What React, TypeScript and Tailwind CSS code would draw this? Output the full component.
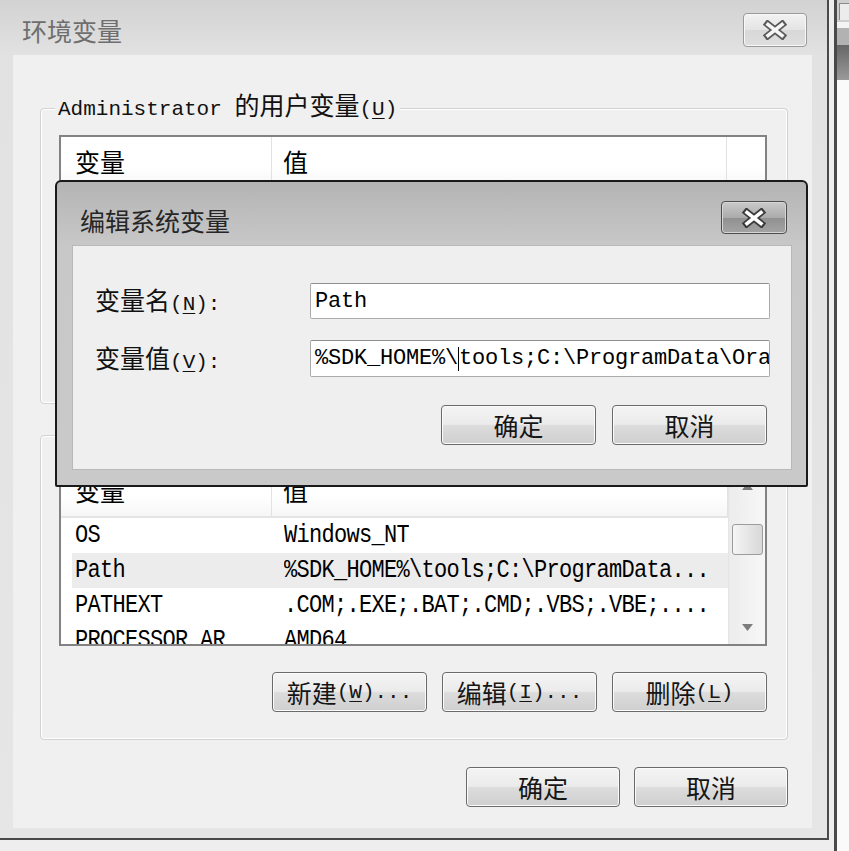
import React from "react";

const CJK = "font-['Noto_Sans_CJK_SC',sans-serif]";

function Half({ children }: { children: React.ReactNode }) {
  return <span className="font-['Liberation_Mono',monospace] text-[21px]">{children}</span>;
}

function U({ children }: { children: React.ReactNode }) {
  return <span className="underline underline-offset-[3px] decoration-1">{children}</span>;
}

function XGlyph({ outline, fill }: { outline: string; fill: string }) {
  return (
    <svg width="26" height="20" viewBox="0 0 26 20">
      <path d="M3 2 L23 18 M23 2 L3 18" stroke={outline} strokeWidth="7" fill="none" />
      <path d="M4.6 3.3 L21.4 16.7 M21.4 3.3 L4.6 16.7" stroke={fill} strokeWidth="3.6" fill="none" />
    </svg>
  );
}

function Btn({ children, className }: { children: React.ReactNode; className: string }) {
  return (
    <div
      className={
        "flex items-center justify-center rounded-[4px] border border-[#6a6a6a] bg-[linear-gradient(#f4f4f4,#ebebeb_48%,#dcdcdc_52%,#cfcfcf)] shadow-[inset_0_0_0_1px_#fbfbfb] text-[25px] leading-none text-[#151515] whitespace-nowrap " +
        className
      }
    >
      {children}
    </div>
  );
}

type Row = { name: string; value: string; sel?: boolean };

function ListHeader({ filler }: { filler: boolean }) {
  return (
    <div className="h-[52px] shrink-0 flex border-b-2 border-[#e4e4e4] bg-[linear-gradient(#ffffff,#ffffff_60%,#f6f6f6)] text-[25px] text-black">
      <div className="w-[211px] shrink-0 border-r border-[#e2e2e2] pl-[14px] flex items-center">变量</div>
      <div className={filler ? "w-[455px] shrink-0 border-r border-[#e2e2e2] pl-[11px] flex items-center" : "flex-1 border-r border-[#e2e2e2] pl-[11px] flex items-center"}>值</div>
      {filler ? <div className="flex-1" /> : null}
    </div>
  );
}

function ListRows({ rows }: { rows: Row[] }) {
  return (
    <div className="flex flex-col font-['Liberation_Mono',monospace] text-[22px] tracking-[-0.7px] text-black">
      {rows.map((r) => (
        <div
          key={r.name}
          className={
            r.sel
              ? "h-[35px] shrink-0 ml-[11px] flex items-center bg-[#ececec] whitespace-nowrap"
              : "h-[35px] shrink-0 ml-[11px] flex items-center whitespace-nowrap"
          }
        >
          <div className="w-[200px] shrink-0 pl-[3px] overflow-hidden scale-y-[1.18]">{r.name}</div>
          <div className="pl-[12px] overflow-hidden scale-y-[1.18]">{r.value}</div>
        </div>
      ))}
    </div>
  );
}

function Arrow({ up }: { up: boolean }) {
  return (
    <svg width="11" height="7" viewBox="0 0 11 7">
      <path d={up ? "M0 7 L5.5 0 L11 7 Z" : "M0 0 L11 0 L5.5 7 Z"} fill="#7c7c7c" />
    </svg>
  );
}

function UserList() {
  const rows: Row[] = [
    { name: "TEMP", value: "%USERPROFILE%\\AppData\\Local\\Temp" },
    { name: "TMP", value: "%USERPROFILE%\\AppData\\Local\\Temp" },
  ];
  return (
    <div className="w-[708px] h-[182px] shrink-0 border-2 border-[#828282] bg-white flex flex-col overflow-hidden">
      <ListHeader filler={true} />
      <ListRows rows={rows} />
    </div>
  );
}

function SystemList() {
  const rows: Row[] = [
    { name: "OS", value: "Windows_NT" },
    { name: "Path", value: "%SDK_HOME%\\tools;C:\\ProgramData...", sel: true },
    { name: "PATHEXT", value: ".COM;.EXE;.BAT;.CMD;.VBS;.VBE;...." },
    { name: "PROCESSOR_AR", value: "AMD64" },
  ];
  return (
    <div className="w-[708px] h-[182px] shrink-0 border-2 border-[#828282] bg-white flex overflow-hidden">
      <div className="w-[667px] shrink-0 flex flex-col overflow-hidden">
        <ListHeader filler={false} />
        <ListRows rows={rows} />
      </div>
      <div className="w-[37px] shrink-0 h-full border-l border-[#e4e4e4] bg-[linear-gradient(90deg,#ececec,#f7f7f7)] flex flex-col items-center">
        <div className="h-[40px] shrink-0 flex items-center justify-center">
          <Arrow up={true} />
        </div>
        <div className="mt-[18px] w-[31px] h-[31px] shrink-0 rounded-[3px] border border-[#9c9c9c] bg-[linear-gradient(90deg,#f6f6f6,#e6e6e6_50%,#d8d8d8)]" />
        <div className="flex-1" />
        <div className="h-[34px] shrink-0 flex items-center justify-center">
          <Arrow up={false} />
        </div>
      </div>
    </div>
  );
}

export default function App() {
  return (
    <div className={"relative w-[849px] h-[851px] overflow-hidden bg-[#eeeeee] flex items-start text-black " + CJK}>
      {/* main window */}
      <div className="w-[829px] h-[840px] shrink-0 flex flex-col border-r-2 border-b-2 border-[#4a4a4a] bg-[linear-gradient(#d2d2d2,#e2e2e2_55px,#e6e6e6)]">
        <div className="h-[55px] shrink-0 flex items-start justify-between pl-[22px] pr-[20px]">
          <div className="mt-[14px] text-[25px] leading-[32px] text-[#6e6e6e]">环境变量</div>
          <div className="mt-[13px] w-[64px] h-[34px] rounded-[4px] border border-[#9a9a9a] bg-[linear-gradient(#f2f2f2,#e4e4e4_50%,#d8d8d8_50%,#dedede)] shadow-[inset_0_0_0_1px_#f8f8f8] flex items-center justify-center">
            <XGlyph outline="#5a5a5a" fill="#f6f6f6" />
          </div>
        </div>

        <div className="ml-[13px] w-[799px] h-[773px] shrink-0 bg-[#f0f0f0] flex flex-col pl-[27px] pt-[53px]">
          {/* group 1 */}
          <div className="relative w-[748px] h-[296px] shrink-0 rounded-[4px] border border-[#d2d2d2] shadow-[inset_0_0_0_1px_#ffffff] pl-[18px] pt-[26px] flex flex-col">
            <div className="absolute left-[14px] -top-[20px] px-[3px] bg-[#f0f0f0] leading-[30px] text-[25px] text-[#111] whitespace-nowrap">
              <Half>Administrator </Half>的用户变量<Half>(<U>U</U>)</Half>
            </div>
            <UserList />
            <div className="mt-[26px] w-[708px] flex justify-end gap-[15px]">
              <Btn className="w-[155px] h-[40px]">新建<Half>(<U>N</U>)...</Half></Btn>
              <Btn className="w-[155px] h-[40px]">编辑<Half>(<U>E</U>)...</Half></Btn>
              <Btn className="w-[155px] h-[40px]">删除<Half>(<U>D</U>)</Half></Btn>
            </div>
          </div>

          {/* group 2 */}
          <div className="relative mt-[31px] w-[748px] h-[305px] shrink-0 rounded-[4px] border border-[#d2d2d2] shadow-[inset_0_0_0_1px_#ffffff] pl-[18px] pt-[28px] flex flex-col">
            <div className="absolute left-[14px] -top-[20px] px-[3px] bg-[#f0f0f0] leading-[30px] text-[25px] text-[#111] whitespace-nowrap">
              系统变量<Half>(<U>S</U>)</Half>
            </div>
            <SystemList />
            <div className="mt-[26px] w-[708px] flex justify-end gap-[15px]">
              <Btn className="w-[155px] h-[40px]">新建<Half>(<U>W</U>)...</Half></Btn>
              <Btn className="w-[155px] h-[40px]">编辑<Half>(<U>I</U>)...</Half></Btn>
              <Btn className="w-[155px] h-[40px]">删除<Half>(<U>L</U>)</Half></Btn>
            </div>
          </div>

          <div className="mt-[27px] w-[748px] flex justify-end gap-[14px]">
            <Btn className="w-[154px] h-[40px]">确定</Btn>
            <Btn className="w-[154px] h-[40px]">取消</Btn>
          </div>
        </div>
      </div>

      {/* neighbouring window at right */}
      <div className="ml-[5px] w-[15px] h-[851px] shrink-0 border-l-[3px] border-[#4a4a4a] bg-[#fafafa] flex flex-col">
        <div className="h-[22px] shrink-0 bg-[#cfcfcf] pl-[2px] pt-[3px]">
          <div className="h-[17px] border-l border-t border-[#8a8a8a] bg-[#ececec]" />
        </div>
        <div className="h-[6px] shrink-0 bg-[#f4f4f4]" />
        <div className="h-[17px] shrink-0 bg-[#b2b2b2]" />
        <div className="h-[35px] shrink-0 bg-[linear-gradient(#666666,#9a9a9a)]" />
      </div>

      {/* edit dialog over the window */}
      <div className="absolute left-[55px] top-[180px] w-[753px] h-[307px] rounded-t-[6px] rounded-b-[2px] border-2 border-[#1a1a1a] bg-[linear-gradient(#b4b4b4,#c8c8c8_64px,#c9c9c9)] flex flex-col">
        <div className="h-[63px] shrink-0 flex items-start justify-between pl-[23px] pr-[19px]">
          <div className="mt-[22px] text-[25px] leading-[32px] text-[#262626]">编辑系统变量</div>
          <div className="mt-[19px] w-[66px] h-[33px] rounded-[4px] border border-[#4e4e4e] bg-[linear-gradient(#cacaca,#ababab_50%,#909090_50%,#a4a4a4)] shadow-[inset_0_0_0_1px_#d6d6d6] flex items-center justify-center">
            <XGlyph outline="#3a3a3a" fill="#ffffff" />
          </div>
        </div>
        <div className="ml-[15px] w-[720px] h-[225px] shrink-0 bg-[#efefef] border border-[#b9b9b9] flex flex-col pl-[22px] pt-[37px]">
          <div className="h-[36px] shrink-0 flex items-center">
            <div className="w-[215px] shrink-0 text-[25px] leading-none text-[#111] whitespace-nowrap">
              变量名<Half>(<U>N</U>):</Half>
            </div>
            <div className="w-[460px] h-full bg-white border border-[#ababab] border-t-[#8f8f8f] rounded-[2px] flex items-center pl-[4px] overflow-hidden whitespace-nowrap font-['Liberation_Mono',monospace] text-[22px] tracking-[-0.2px] text-black">
              Path
            </div>
          </div>
          <div className="mt-[21px] h-[37px] shrink-0 flex items-center">
            <div className="w-[215px] shrink-0 text-[25px] leading-none text-[#111] whitespace-nowrap">
              变量值<Half>(<U>V</U>):</Half>
            </div>
            <div className="w-[460px] h-full bg-white border border-[#ababab] border-t-[#8f8f8f] rounded-[2px] flex items-center pl-[4px] overflow-hidden whitespace-nowrap font-['Liberation_Mono',monospace] text-[22px] tracking-[-0.2px] text-black">
              <span>%SDK_HOME%\</span>
              <span className="w-[1px] h-[24px] shrink-0 bg-black" />
              <span>tools;C:\ProgramData\Oracle\Java\javapath;</span>
            </div>
          </div>
          <div className="mt-[28px] flex justify-end gap-[16px] pr-[24px]">
            <Btn className="w-[155px] h-[40px]">确定</Btn>
            <Btn className="w-[155px] h-[40px]">取消</Btn>
          </div>
        </div>
      </div>
    </div>
  );
}
